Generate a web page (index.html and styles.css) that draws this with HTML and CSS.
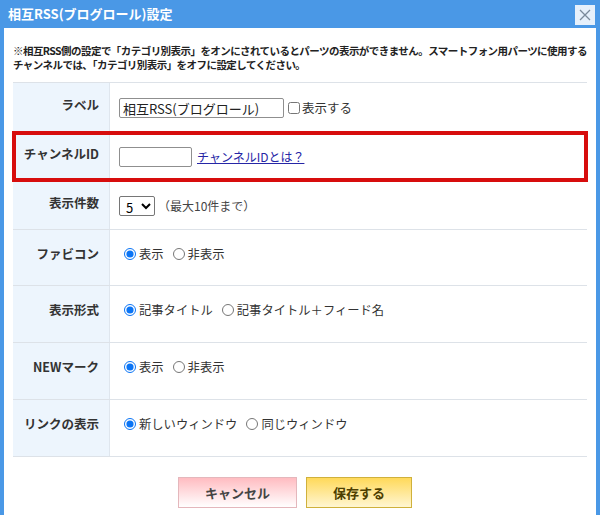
FILE: index.html
```html
<!DOCTYPE html>
<html lang="ja">
<head>
<meta charset="utf-8">
<title>相互RSS(ブログロール)設定</title>
<link rel="stylesheet" href="styles.css">
</head>
<body>
<div class="dialog">
  <div class="titlebar">
    <span class="title">相互RSS(ブログロール)設定</span>
    <span class="close" aria-label="閉じる">
      <svg width="14" height="14" viewBox="0 0 14 14"><path d="M2 2L12 12M12 2L2 12" stroke="#7b8a9a" stroke-width="1.3" fill="none"/></svg>
    </span>
  </div>
  <div class="panel">
    <p class="notice"><span class="line">※相互RSS側の設定で「カテゴリ別表示」をオンにされているとパーツの表示ができません。スマートフォン用パーツに使用する</span><span class="line">チャンネルでは、「カテゴリ別表示」をオフに設定してください。</span></p>
    <div class="form">
      <div class="row">
        <div class="label">ラベル</div>
        <div class="value">
          <input class="text wide" type="text" value="相互RSS(ブログロール)"><label class="check"><input type="checkbox">表示する</label>
        </div>
      </div>
      <div class="row highlight">
        <div class="label">チャンネルID</div>
        <div class="value">
          <input class="text narrow" type="text"><a class="help" href="#">チャンネルIDとは？</a>
        </div>
      </div>
      <div class="row">
        <div class="label">表示件数</div>
        <div class="value">
          <select class="count"><option>5</option></select><span class="hint">（最大10件まで）</span>
        </div>
      </div>
      <div class="row tall fav">
        <div class="label">ファビコン</div>
        <div class="value">
          <label class="radio"><input type="radio" name="fav" checked>表示</label>
          <label class="radio"><input type="radio" name="fav">非表示</label>
        </div>
      </div>
      <div class="row tall">
        <div class="label">表示形式</div>
        <div class="value">
          <label class="radio"><input type="radio" name="fmt" checked>記事タイトル</label>
          <label class="radio"><input type="radio" name="fmt">記事タイトル＋フィード名</label>
        </div>
      </div>
      <div class="row tall">
        <div class="label">NEWマーク</div>
        <div class="value">
          <label class="radio"><input type="radio" name="new" checked>表示</label>
          <label class="radio"><input type="radio" name="new">非表示</label>
        </div>
      </div>
      <div class="row tall">
        <div class="label">リンクの表示</div>
        <div class="value">
          <label class="radio"><input type="radio" name="link" checked>新しいウィンドウ</label>
          <label class="radio"><input type="radio" name="link">同じウィンドウ</label>
        </div>
      </div>
    </div>
    <div class="buttons">
      <button class="btn cancel" type="button">キャンセル</button>
      <button class="btn save" type="button">保存する</button>
    </div>
  </div>
</div>
</body>
</html>
```
FILE: styles.css
```css
* { box-sizing: border-box; }
html, body {
  margin: 0;
  padding: 0;
  height: 100%;
}
body {
  font-family: "Noto Sans CJK JP", "Noto Sans", sans-serif;
  color: #333;
  background: #4a98e6;
  overflow: hidden;
}
.dialog {
  display: flex;
  flex-direction: column;
  height: 515px;
  padding: 0 4px;
  background: #4a98e6;
}
.titlebar {
  height: 28px;
  display: flex;
  align-items: center;
  justify-content: space-between;
  padding: 0 1px 0 4px;
}
.title {
  color: #fff;
  font-weight: bold;
  font-size: 13px;
  line-height: 16px;
}
.close {
  width: 20px;
  height: 20px;
  margin-top: 1px;
  background: #e6f0fb;
  display: flex;
  align-items: center;
  justify-content: center;
}
.panel {
  flex: 1;
  background: #fff;
  padding: 16px 9px 0;
}
.notice {
  margin: 0 0 10px;
  font-size: 10.5px;
  font-weight: bold;
  color: #222;
  white-space: nowrap;
  letter-spacing: -0.55px;
}
.notice .line {
  display: block;
  height: 14px;
  line-height: 14px;
}
.form {
  border-top: 1px solid #dde2e8;
}
.row {
  display: flex;
  border-bottom: 1px solid #dde2e8;
}
.row.highlight {
  outline: 4px solid #d70d0d;
  outline-offset: -3px;
  position: relative;
}
.label {
  width: 97px;
  flex: none;
  background: #edf5fd;
  border-right: 1px solid #dfe6ee;
  text-align: right;
  font-weight: bold;
  font-size: 12.5px;
  line-height: 20px;
  padding: 12px 10px 16px 0;
  color: #333;
}
.value {
  flex: 1;
  display: flex;
  font-size: 12px;
  line-height: 20px;
  padding: 15px 9px 13px;
  align-self: stretch;
  align-items: flex-start;
}
.row.tall .label { padding: 14px 10px 22px 0; }
.row.tall .value { padding: 14px 9px 22px; }
.row.tall.fav .label { padding: 14px 10px 21px 0; }
.row.tall.fav .value { padding: 14px 9px 21px; }
.text {
  height: 20px;
  border: 1px solid #8f8f8f;
  border-radius: 2px;
  font-family: "Noto Sans CJK JP", "Noto Sans", sans-serif;
  font-size: 13px;
  padding: 0 3px;
  color: #222;
  margin: 0;
  line-height: 18px;
}
.wide { width: 165px; }
.narrow { width: 73px; }
.check {
  display: inline-flex;
  align-items: center;
  font-size: 12.5px;
}
.check input {
  margin: 0 2px 0 4px;
  width: 12px;
  height: 12px;
}
.help {
  margin-left: 5px;
  color: #2626a6;
  text-decoration: underline;
  font-size: 12px;
}
.count {
  width: 36px;
  height: 20px;
  font-size: 13px;
  border: 1px solid #767676;
  border-radius: 2px;
  padding: 0 0 0 2px;
  background: #fff;
  margin: 0;
  font-family: "Noto Sans CJK JP", "Noto Sans", sans-serif;
}
.hint {
  margin-left: 3px;
  color: #444;
}
.radio {
  display: inline-flex;
  align-items: center;
  color: #333;
  font-size: 12.3px;
}
.radio input {
  margin: 0 3px 0 5px;
  width: 12px;
  height: 12px;
  accent-color: #0a74f5;
}
.radio + .radio input { margin-left: 9px; }
.buttons {
  display: flex;
  justify-content: center;
  gap: 9px;
  margin-top: 20px;
  padding-right: 10px;
}
.btn {
  height: 31px;
  font-family: "Noto Sans CJK JP", "Noto Sans", sans-serif;
  font-weight: bold;
  font-size: 13px;
  cursor: pointer;
  padding: 0;
}
.cancel {
  width: 119px;
  border: 1px solid #e4b7bc;
  background: linear-gradient(#ffbcc1, #fff);
  color: #444;
}
.save {
  width: 106px;
  border: 1px solid #cfb13c;
  background: linear-gradient(#ffd95a, #fff6d2);
  color: #4e3f00;
}
```
